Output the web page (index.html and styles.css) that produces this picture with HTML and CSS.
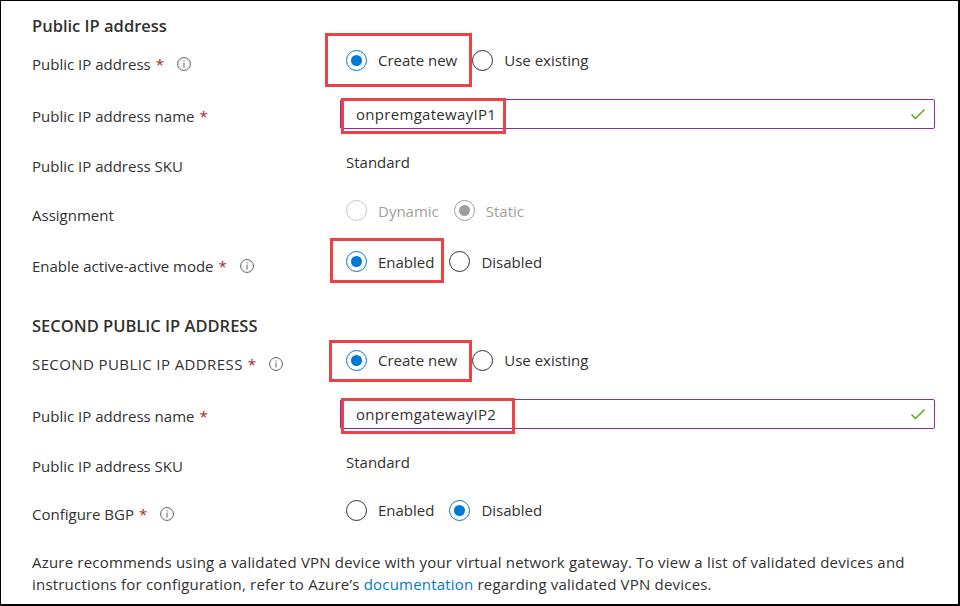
FILE: index.html
```html
<!DOCTYPE html>
<html lang="en">
<head>
<meta charset="utf-8">
<title>Public IP address</title>
<link rel="stylesheet" href="styles.css">
</head>
<body>
<div class="frame">
  <h2 class="section-title first">Public IP address</h2>

  <div class="row h50">
    <div class="label">Public IP address <span class="req">*</span><span class="info"><svg viewBox="0 0 14 14" width="14" height="14"><circle cx="7" cy="7" r="6.4" fill="none" stroke="#605e5c" stroke-width="1"/><rect x="6.5" y="3.3" width="1" height="1.2" fill="#605e5c"/><rect x="6.5" y="5.6" width="1" height="5" fill="#605e5c"/></svg></span></div>
    <div class="value">
      <div class="radios">
        <label class="opt hl hl-a"><span class="radio on"></span><span>Create new</span></label>
        <label class="opt"><span class="radio"></span><span>Use existing</span></label>
      </div>
    </div>
  </div>

  <div class="row h53">
    <div class="label">Public IP address name <span class="req">*</span></div>
    <div class="value flat">
      <div class="input hl-in1"><span class="input-text">onpremgatewayIP1</span><svg class="check" viewBox="0 0 16 16" width="16" height="16"><path d="M1.5 8.5 L5.5 12.5 L14.5 3.5" fill="none" stroke="#57a300" stroke-width="1.4"/></svg></div>
    </div>
  </div>

  <div class="row h47">
    <div class="label">Public IP address SKU</div>
    <div class="value"><span class="static-text">Standard</span></div>
  </div>

  <div class="row h51">
    <div class="label">Assignment</div>
    <div class="value">
      <div class="radios disabled">
        <label class="opt"><span class="radio"></span><span>Dynamic</span></label>
        <label class="opt"><span class="radio on"></span><span>Static</span></label>
      </div>
    </div>
  </div>

  <div class="row h51">
    <div class="label">Enable active-active mode <span class="req">*</span><span class="info"><svg viewBox="0 0 14 14" width="14" height="14"><circle cx="7" cy="7" r="6.4" fill="none" stroke="#605e5c" stroke-width="1"/><rect x="6.5" y="3.3" width="1" height="1.2" fill="#605e5c"/><rect x="6.5" y="5.6" width="1" height="5" fill="#605e5c"/></svg></span></div>
    <div class="value">
      <div class="radios">
        <label class="opt hl hl-b"><span class="radio on"></span><span>Enabled</span></label>
        <label class="opt"><span class="radio"></span><span>Disabled</span></label>
      </div>
    </div>
  </div>

  <h2 class="section-title second">SECOND PUBLIC IP ADDRESS</h2>

  <div class="row h50">
    <div class="label caps">SECOND PUBLIC IP ADDRESS <span class="req">*</span><span class="info"><svg viewBox="0 0 14 14" width="14" height="14"><circle cx="7" cy="7" r="6.4" fill="none" stroke="#605e5c" stroke-width="1"/><rect x="6.5" y="3.3" width="1" height="1.2" fill="#605e5c"/><rect x="6.5" y="5.6" width="1" height="5" fill="#605e5c"/></svg></span></div>
    <div class="value">
      <div class="radios">
        <label class="opt hl hl-c"><span class="radio on"></span><span>Create new</span></label>
        <label class="opt"><span class="radio"></span><span>Use existing</span></label>
      </div>
    </div>
  </div>

  <div class="row h53">
    <div class="label">Public IP address name <span class="req">*</span></div>
    <div class="value flat">
      <div class="input hl-in2"><span class="input-text">onpremgatewayIP2</span><svg class="check" viewBox="0 0 16 16" width="16" height="16"><path d="M1.5 8.5 L5.5 12.5 L14.5 3.5" fill="none" stroke="#57a300" stroke-width="1.4"/></svg></div>
    </div>
  </div>

  <div class="row h47">
    <div class="label">Public IP address SKU</div>
    <div class="value"><span class="static-text">Standard</span></div>
  </div>

  <div class="row h50">
    <div class="label">Configure BGP <span class="req">*</span><span class="info"><svg viewBox="0 0 14 14" width="14" height="14"><circle cx="7" cy="7" r="6.4" fill="none" stroke="#605e5c" stroke-width="1"/><rect x="6.5" y="3.3" width="1" height="1.2" fill="#605e5c"/><rect x="6.5" y="5.6" width="1" height="5" fill="#605e5c"/></svg></span></div>
    <div class="value">
      <div class="radios">
        <label class="opt"><span class="radio"></span><span>Enabled</span></label>
        <label class="opt"><span class="radio on"></span><span>Disabled</span></label>
      </div>
    </div>
  </div>

  <p class="note">Azure recommends using a validated VPN device with your virtual network gateway. To view a list of validated devices and instructions for configuration, refer to Azure’s <a href="#">documentation</a> regarding validated VPN devices.</p>
</div>
</body>
</html>
```

FILE: styles.css
```css
* { box-sizing: border-box; }
html, body { margin: 0; padding: 0; background: #fff; }
body {
  font-family: "Open Sans", "Noto Sans", sans-serif;
  font-size: 15px;
  color: #323130;
}
.frame {
  width: 960px;
  height: 606px;
  border-style: solid;
  border-color: #000;
  border-width: 1px 2px 2px 1px;
  padding: 0 23px 0 31px;
  overflow: hidden;
}
.section-title {
  margin: 0;
  font-size: 16.5px;
  font-weight: 600;
  height: 24px;
  line-height: 24px;
}
.section-title.first { margin-top: 13px; height: 23px; line-height: 23px; }
.section-title.second { margin-top: 26px; height: 22px; line-height: 22px; }
.row {
  display: grid;
  grid-template-columns: 314px 1fr;
  align-items: center;
}
.h47 { height: 47px; }
.h50 { height: 50px; }
.h51 { height: 51px; }
.h53 { height: 53px; }
.label {
  display: flex;
  align-items: center;
  position: relative;
  top: 2px;
  line-height: 20px;
}
.label.caps { letter-spacing: 0.4px; }
.req { color: #a4262c; margin-left: 5px; }
.info { display: inline-flex; margin-left: 13px; }
.value {
  position: relative;
  top: -2px;
  display: flex;
  align-items: center;
}
.value.flat { top: 0; }
.radios { display: flex; align-items: center; gap: 15px; }
.opt {
  position: relative;
  display: flex;
  align-items: center;
  gap: 11px;
  line-height: 20px;
}
.radio {
  width: 21px;
  height: 21px;
  border-radius: 50%;
  border: 1px solid #323130;
  display: flex;
  align-items: center;
  justify-content: center;
}
.radio.on { border-color: #0078d4; }
.radio.on::before {
  content: "";
  width: 11px;
  height: 11px;
  border-radius: 50%;
  background: #0078d4;
}
.disabled .opt { color: #a19f9d; }
.disabled .radio { border-color: #c8c6c4; }
.disabled .radio.on { border-color: #a19f9d; }
.disabled .radio.on::before { background: #a19f9d; }
.hl::after {
  content: "";
  position: absolute;
  border: 3px solid #ef4044;
}
.hl-a::after { left: -21px; right: -15px; top: -17px; bottom: -16px; }
.hl-b::after { left: -16px; right: -10px; top: -13px; bottom: -11px; }
.hl-c::after { left: -17px; right: -15px; top: -10px; bottom: -11px; }
.static-text { line-height: 20px; }
.input {
  position: relative;
  margin-left: -6px;
  width: 595px;
  height: 30px;
  border: 1px solid #8a2da5;
  border-radius: 2px;
  display: flex;
  align-items: center;
  justify-content: space-between;
  padding: 0 8px 0 15px;
}
.input-text { letter-spacing: 0.3px; }
.input::after {
  content: "";
  position: absolute;
  left: 0;
  top: -2px;
  height: 30px;
  border: 3px solid #ef4044;
}
.hl-in1::after { width: 159px; }
.hl-in2::after { width: 168px; }
.check { display: block; }
.note {
  margin: 14px 0 0;
  line-height: 22px;
  width: 900px;
  letter-spacing: 0.2px;
}
.note a { color: #0078d4; text-decoration: none; }
```
